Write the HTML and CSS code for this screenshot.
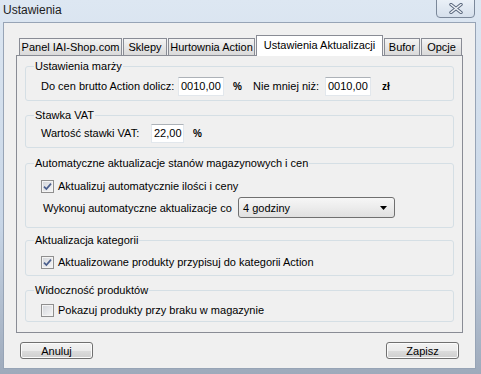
FILE: index.html
```html
<!DOCTYPE html>
<html lang="pl">
<head>
    <meta charset="UTF-8">
    <title>Ustawienia</title>
    <link rel="stylesheet" href="styles.css">
</head>
<body>
    <div class="window">
        <div class="titlebar">
            <span class="title">Ustawienia</span>
            <span class="close">
                <svg width="14" height="11" viewBox="0 0 14 11">
                    <path d="M2 1.5 L12 9.5 M12 1.5 L2 9.5" stroke="#56647a" stroke-width="3.4" stroke-linecap="round"/>
                    <path d="M2 1.5 L12 9.5 M12 1.5 L2 9.5" stroke="#eef2f7" stroke-width="1.6" stroke-linecap="round"/>
                </svg>
            </span>
        </div>
        <div class="client">
            <div class="tab-row">
                <div class="tab tab-panel-iai">Panel IAI-Shop.com</div>
                <div class="tab tab-sklepy">Sklepy</div>
                <div class="tab tab-hurtownia">Hurtownia Action</div>
                <div class="tab tab-active">Ustawienia Aktualizacji</div>
                <div class="tab tab-bufor">Bufor</div>
                <div class="tab tab-opcje">Opcje</div>
            </div>
            <div class="tab-page">
                <fieldset class="group group-marza">
                    <legend>Ustawienia marży</legend>
                    <div class="row">
                        <label class="lbl-brutto">Do cen brutto Action dolicz:</label>
                        <span class="textbox tb-wide">0010,00</span>
                        <span class="unit unit-pct">%</span>
                        <label class="lbl-min">Nie mniej niż:</label>
                        <span class="textbox tb-wide">0010,00</span>
                        <span class="unit unit-zl">zł</span>
                    </div>
                </fieldset>
                <fieldset class="group group-vat">
                    <legend>Stawka VAT</legend>
                    <div class="row">
                        <label class="lbl-vat">Wartość stawki VAT:</label>
                        <span class="textbox tb-narrow">22,00</span>
                        <span class="unit unit-pct">%</span>
                    </div>
                </fieldset>
                <fieldset class="group group-auto">
                    <legend>Automatyczne aktualizacje stanów magazynowych i cen</legend>
                    <div class="row row-check">
                        <span class="checkbox">
                            <svg width="9" height="9" viewBox="0 0 9 9"><path d="M1 4.6 L3.4 7 L8 1.6" fill="none" stroke="#4a5e8c" stroke-width="1.7"/></svg>
                        </span>
                        <span>Aktualizuj automatycznie ilości i ceny</span>
                    </div>
                    <div class="row row-select">
                        <label class="lbl-co">Wykonuj automatyczne aktualizacje co</label>
                        <span class="combo">
                            <span>4 godziny</span>
                            <svg width="7" height="4" viewBox="0 0 7 4"><path d="M0 0 H7 L3.5 4 Z" fill="#000"/></svg>
                        </span>
                    </div>
                </fieldset>
                <fieldset class="group group-kat">
                    <legend>Aktualizacja kategorii</legend>
                    <div class="row row-check">
                        <span class="checkbox">
                            <svg width="9" height="9" viewBox="0 0 9 9"><path d="M1 4.6 L3.4 7 L8 1.6" fill="none" stroke="#4a5e8c" stroke-width="1.7"/></svg>
                        </span>
                        <span>Aktualizowane produkty przypisuj do kategorii Action</span>
                    </div>
                </fieldset>
                <fieldset class="group group-widok">
                    <legend>Widoczność produktów</legend>
                    <div class="row row-check">
                        <span class="checkbox"></span>
                        <span>Pokazuj produkty przy braku w magazynie</span>
                    </div>
                </fieldset>
            </div>
            <div class="buttons">
                <span class="button">Anuluj</span>
                <span class="button">Zapisz</span>
            </div>
        </div>
    </div>
</body>
</html>
```
FILE: styles.css
```css
* {
    margin: 0;
    padding: 0;
    box-sizing: border-box;
}
body {
    width: 481px;
    height: 374px;
    overflow: hidden;
    font-family: "Liberation Sans", Arial, sans-serif;
    font-size: 11px;
    color: #000000;
    background: linear-gradient(to bottom, #dde7f2, #c8d6e7 60%, #9eaabb);
}
.window {
    height: 374px;
    display: flex;
    flex-direction: column;
    padding: 0 5px 5px 3px;
}
.titlebar {
    height: 22px;
    display: flex;
    justify-content: space-between;
    align-items: flex-start;
}
.title {
    font-size: 12px;
    line-height: 14px;
    padding-top: 3px;
    color: #1c1c1c;
}
.close {
    width: 39px;
    height: 19px;
    margin-top: -1px;
    margin-right: 1px;
    display: flex;
    align-items: center;
    justify-content: center;
    border: 1px solid #7b889a;
    border-radius: 0 0 4px 4px;
    background: linear-gradient(to bottom, #eaf0f7, #d6e0ec);
}
.client {
    flex: 1;
    background: #f0f0f0;
    border: 1px solid #97a4b6;
    padding: 12px 12px 0 12px;
}
/* tabs */
.tab-row {
    display: flex;
    align-items: flex-end;
    gap: 1px;
    height: 21px;
    padding-left: 3px;
    margin-bottom: -1px;
    position: relative;
    z-index: 1;
}
.tab {
    height: 17px;
    margin-bottom: 1px;
    display: flex;
    align-items: center;
    justify-content: center;
    border: 1px solid #898c95;
    border-bottom: none;
    background: linear-gradient(to bottom, #f4f4f4, #e6e6e6 50%, #dadada);
    white-space: nowrap;
}
.tab-panel-iai { width: 103px; }
.tab-sklepy { width: 44px; }
.tab-hurtownia { width: 87px; }
.tab-bufor { width: 36px; }
.tab-opcje { width: 41px; }
.tab-active {
    width: 127px;
    height: 21px;
    margin-bottom: 0;
    background: #ffffff;
    padding-bottom: 3px;
}
.tab-page {
    height: 278px;
    border: 1px solid #898c95;
    background: #f0f0f0;
    padding-top: 3px;
}
/* group boxes */
.group {
    margin: 0 8px;
    border: 1px solid #d5dfe5;
    border-radius: 3px;
    padding: 0 8px 4px 8px;
}
.group legend {
    line-height: 14px;
    padding: 0 1px;
}
.row {
    display: flex;
    align-items: center;
    height: 20px;
    padding-left: 7px;
    white-space: nowrap;
}
.group-marza .row { margin-top: 3px; }
.group-vat { margin-top: 7px; }
.group-vat .row { margin-top: 1px; }
.group-auto {
    margin-top: 8px;
    padding-bottom: 9px;
}
.group-auto .row-check { margin-top: 6px; }
.group-auto .row-select {
    margin-top: 1px;
    height: 21px;
    padding-left: 9px;
}
.group-kat {
    margin-top: 5px;
    padding-bottom: 3px;
}
.group-kat .row { margin-top: 5px; }
.group-widok {
    margin-top: 7px;
    padding-bottom: 1px;
}
.group-widok .row { margin-top: 3px; }
.lbl-brutto { width: 137px; }
.lbl-min { width: 72px; margin-left: 10px; }
.lbl-vat { width: 110px; }
.lbl-co { width: 195px; }
.textbox {
    height: 19px;
    line-height: 17px;
    padding-left: 2px;
    background: #ffffff;
    border: 1px solid #e2e7ec;
    border-top-color: #adb2b8;
}
.tb-wide { width: 46px; }
.tb-narrow { width: 33px; }
.unit {
    font-weight: bold;
    font-size: 10px;
}
.unit-pct { margin-left: 9px; width: 10px; }
.unit-zl { margin-left: 11px; }
.checkbox {
    width: 13px;
    height: 13px;
    margin-right: 4px;
    display: flex;
    align-items: center;
    justify-content: center;
    border: 1px solid #8f8f8f;
    background: linear-gradient(135deg, #d2d5da, #f7f7f7);
    box-shadow: inset 0 0 0 1px #f4f4f4;
}
.combo {
    width: 157px;
    height: 21px;
    display: flex;
    align-items: center;
    justify-content: space-between;
    padding: 0 7px 0 4px;
    border: 1px solid #707070;
    border-radius: 3px;
    background: linear-gradient(to bottom, #f6f6f6, #ececec 50%, #e0e0e0);
}
/* buttons */
.buttons {
    display: flex;
    justify-content: space-between;
    padding: 0 4px 0 4px;
    margin-top: 9px;
}
.button {
    width: 73px;
    height: 17px;
    display: flex;
    align-items: center;
    justify-content: center;
    border: 1px solid #707070;
    border-radius: 3px;
    box-shadow: inset 0 0 0 1px #fbfbfb;
    background: linear-gradient(to bottom, #f2f2f2, #ebebeb 50%, #dddddd 50%, #cfcfcf);
}
```
